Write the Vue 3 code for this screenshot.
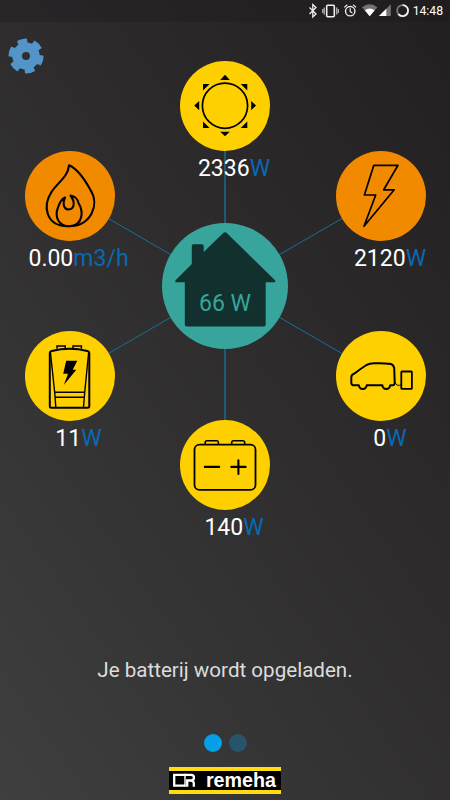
<script setup>
import { ref } from 'vue';

const home = ref(66);
const message = ref('Je batterij wordt opgeladen.');
const pages = 2;
const currentPage = ref(1);

// x and y are the centre of each circle on the canvas
const nodes = ref([
  { id: 'sun', x: 225, y: 45, value: '2336', unit: 'W', color: 'yellow' },
  { id: 'grid', x: 381, y: 135, value: '2120', unit: 'W', color: 'orange' },
  { id: 'car', x: 381, y: 315, value: '0', unit: 'W', color: 'yellow' },
  { id: 'battery', x: 225, y: 404, value: '140', unit: 'W', color: 'yellow' },
  { id: 'boiler', x: 69.5, y: 315, value: '11', unit: 'W', color: 'yellow' },
  { id: 'gas', x: 69.5, y: 135, value: '0.00', unit: 'm3/h', color: 'orange' },
]);

const point = (r, deg) => {
  const a = (deg * Math.PI) / 180;
  return `${(r * Math.cos(a)).toFixed(2)} ${(r * Math.sin(a)).toFixed(2)}`;
};

const gearPath = () => {
  let d = '';
  for (let i = 0; i < 6; i++) {
    const a = -104 + i * 60;
    d += `${i ? 'L' : 'M'}${point(13.7, a - 20)}L${point(17.6, a - 17)}`;
    d += `A17.7 17.7 0 0 1 ${point(17.6, a + 17)}L${point(13.7, a + 20)}`;
    d += `A13.7 13.7 0 0 1 ${point(13.7, a + 40)}`;
  }
  return d + 'ZM4 0A4 4 0 1 0 -4 0A4 4 0 1 0 4 0Z';
};
</script>

<template>
  <div class="screen">
    <header class="status-bar">
      <svg class="status-icons" width="104" height="22" viewBox="306 0 104 22">
        <path d="M309.5 7.5l6.5 6.5-3.2 3V4.5l3.2 3-6.5 6.5" fill="none" stroke="#eee" stroke-width="1.3" />
        <rect x="326.7" y="5.2" width="7.6" height="11.6" rx="1" fill="none" stroke="#eee" stroke-width="1.6" />
        <path d="M324.2 7.5v7M336.8 7.5v7M322.8 9v4M338.3 9v4" stroke="#ddd" stroke-width="1" />
        <circle cx="350.2" cy="11.2" r="4.7" fill="none" stroke="#eee" stroke-width="1.4" />
        <path d="M350.2 8.3v3.2l2.2 1.4M344.3 7.4l3-2.6M356.1 7.4l-3-2.6" fill="none" stroke="#eee" stroke-width="1.2" />
        <path d="M362 7.2Q369.7 1.2 377.4 7.2L369.7 16.2Z" fill="#747273" />
        <path d="M364.8 10.3Q369.7 6.8 374.6 10.3L369.7 16.2Z" fill="#fff" />
        <path d="M390.8 4.2V16H379Z" fill="#747273" />
        <path d="M386.3 8.7V16H379Z" fill="#fff" />
        <circle cx="402.6" cy="10.6" r="5.5" fill="none" stroke="#777" stroke-width="1.8" />
        <path d="M402.6 5.1a5.5 5.5 0 1 1 -4.2 9" fill="none" stroke="#eee" stroke-width="1.8" />
      </svg>
      <span class="clock">14:48</span>
    </header>

    <nav class="toolbar">
      <button class="btn-settings">
        <svg width="38" height="38" viewBox="-19 -19 38 38">
          <path :d="gearPath()" fill="#5395c8" fill-rule="evenodd" />
        </svg>
      </button>
    </nav>

    <main class="diagram">
      <svg class="lines" width="450" height="490" viewBox="0 0 450 490">
        <line
          v-for="n in nodes"
          :key="n.id"
          x1="225"
          y1="225"
          :x2="n.x"
          :y2="n.y"
          stroke="#176f9b"
          :stroke-width="n.x === 225 ? 1.4 : 1"
        />
      </svg>

      <div class="home">
        <svg width="126" height="126" viewBox="0 0 126 126">
          <path
            d="M61 10.2Q63 8.4 65 10.2L113 57.3Q114 59.3 112 59.3H103.7V101.5Q103.7 103.4 101.8 103.4H24.8Q22.8 103.4 22.8 101.5V59.3H14.4Q12.4 59.3 13.6 57.3L29.8 41V23Q29.8 21.2 31.5 21.2H40Q41.7 21.2 41.7 23V29Z"
            fill="#12312e"
          />
        </svg>
        <span class="home-value">{{ home }} W</span>
      </div>

      <div
        v-for="n in nodes"
        :key="n.id"
        class="node"
        :style="{ left: n.x + 'px', top: n.y + 'px' }"
      >
        <div class="circle" :class="n.color">
          <svg width="90" height="90" viewBox="0 0 90 90" fill="none" stroke="#000" stroke-width="1.8">
            <g v-if="n.id === 'sun'">
              <circle cx="45" cy="44.7" r="22.6" stroke-width="1.7" />
              <path
                d="M45 13.7l4.8 5.2h-9.6zM45 75.3l4.8-4.6h-9.6zM14.2 44.5l5-4.6v9.4zM76 44.5l-4.8-4.6v9.4zM23 23h6.6l-6.6 6.4zM67.3 23h-6.6l6.6 6.4zM23 67h6.6l-6.6-6.4zM67.3 67h-6.6l6.6-6.4z"
                fill="#000"
                stroke="none"
              />
            </g>
            <path
              v-else-if="n.id === 'grid'"
              d="M37.8 14.3H62L47.7 38.8H58.2L28 75.3L39.7 44H28.4Z"
              stroke-linejoin="round"
              stroke-width="1.7"
            />
            <g v-else-if="n.id === 'gas'" stroke-linejoin="round" stroke-width="2.1">
              <path d="M44 14.3C43 26 33 31 26.5 41C18 54 19.5 75.2 43.5 75.2C66 75.2 75 54 65.5 39C60 29 53 18 44 14.3Z" />
              <path d="M44.5 75.2C34 75.2 29 66 33 56.5C34.5 51.5 36 48.5 40 46.5C38 51 37.5 58 43.5 58.5C49.5 58.5 50.5 51 45.5 44.5C51 45.5 52.5 48 53.5 52C58.5 60 58.5 74.5 44.5 75.2Z" />
            </g>
            <g v-else-if="n.id === 'car'" stroke-linejoin="round">
              <path d="M17 54.3Q15.3 54 15.3 51V46Q15.5 43.5 18.5 42.5Q25 37.5 30.5 34Q33.5 32.5 38 32.3Q47 31.8 55 33Q57.5 33.8 58.2 37L58.7 51.5Q58.8 54.2 56.5 54.2H54.3C53.5 59.3 47 59.3 46.3 54.2H30.8C30 59.3 23.5 59.3 22.8 54.2Z" stroke-width="2" />
              <path d="M59 51.5Q61 56 65.5 53.5" stroke-width="1" />
              <rect x="65.3" y="40.5" width="10.6" height="17.3" rx="0.6" />
            </g>
            <g v-else-if="n.id === 'boiler'">
              <path d="M24.8 22Q24.8 20.5 26.8 20Q44.5 15.7 62.3 20Q64.3 20.5 64.3 22V75.5Q64.3 76.7 62.8 76.7H26.3Q24.8 76.7 24.8 75.5Z" stroke-width="2" />
              <path d="M25.5 22L29.7 61.5L30.8 76M63.6 22L59.7 61.5L58.5 76M29.5 61.3H59.8M29.8 66.2H59.4" stroke-width="1.4" />
              <path d="M32 17.8V15H40.2V17.3M48 17.3V15H56.4V17.8" stroke-width="1.5" />
              <path d="M41.2 29.8H52.3L47.7 38.8H51.3L38.8 54L43 42.8H38.2Z" fill="#000" stroke="none" />
            </g>
            <g v-else stroke-width="1.8">
              <rect x="14.5" y="24.6" width="61" height="45.3" rx="5" />
              <path d="M25.2 24.2V22.5Q25.2 20.8 27 20.8H37Q38.4 20.8 38.4 22.5V24.2M51.7 24.2V22.5Q51.7 20.8 53.5 20.8H63.2Q64.7 20.8 64.7 22.5V24.2" stroke-width="1.6" />
              <path d="M24.8 46.9H39.2M51.3 46.9H65.6M58.4 40.2V54" stroke-width="2.1" stroke-linecap="round" />
            </g>
          </svg>
        </div>
        <p class="reading">{{ n.value }}<span class="unit">{{ n.unit }}</span></p>
      </div>
    </main>

    <p class="message">{{ message }}</p>

    <div class="pager">
      <span
        v-for="p in pages"
        :key="p"
        class="dot"
        :class="{ active: p === currentPage }"
        @click="currentPage = p"
      ></span>
    </div>

    <footer class="brand">
      <svg width="24" height="15" viewBox="0 0 24 15" fill="none" stroke="#fff" stroke-width="2.3">
        <path d="M12.5 1.8H1.2V12.6H12.5" />
        <path d="M12 0.7V13.7" stroke-width="1.4" />
        <path d="M12 1.8H18.2Q21 1.8 21 4.6Q21 7.5 18.2 7.5H14.2V13.7M17.5 7.6Q20.6 7.6 20.8 10V13.7" />
      </svg>
      <span class="brand-name">remeha</span>
    </footer>
  </div>
</template>

<style>
body {
  background-color: #2d2b2c;
}
</style>

<style scoped>
.screen {
  width: 450px;
  height: 800px;
  display: flex;
  flex-direction: column;
  align-items: center;
  overflow: hidden;
  font-family: Roboto, sans-serif;
  color: #fff;
  background: linear-gradient(55deg, #3f3f40 0%, #2e2c2d 55%, #231f20 100%);
}

.status-bar {
  width: 450px;
  height: 22px;
  box-sizing: border-box;
  padding-right: 7px;
  display: flex;
  justify-content: flex-end;
  align-items: center;
  gap: 3px;
  flex-shrink: 0;
  background-color: rgba(30, 27, 28, 0.35);
}

.clock {
  font-size: 12.2px;
  line-height: 22px;
  color: #fff;
}

.toolbar {
  width: 450px;
  height: 39px;
  box-sizing: border-box;
  padding: 15px 0 0 7px;
  flex-shrink: 0;
}

.btn-settings {
  display: block;
  padding: 0;
  border: none;
  background: none;
  cursor: pointer;
}

.diagram {
  position: relative;
  width: 450px;
  height: 490px;
  flex-shrink: 0;
}

.lines {
  display: block;
}

.home {
  position: absolute;
  left: 162px;
  top: 162px;
  width: 126px;
  height: 126px;
  border-radius: 50%;
  background-color: #37a59b;
}

.home-value {
  position: absolute;
  left: 0;
  right: 0;
  top: 67px;
  text-align: center;
  font-size: 23px;
  line-height: 28px;
  color: #37a59b;
}

.node {
  position: absolute;
  width: 90px;
  margin: -45px 0 0 -45px;
  display: flex;
  flex-direction: column;
  align-items: center;
}

.circle {
  width: 90px;
  height: 90px;
  border-radius: 50%;
}

.circle svg {
  display: block;
}

.yellow {
  background-color: #ffd000;
}

.orange {
  background-color: #f28a00;
}

.reading {
  margin: 4px 0 0;
  padding-left: 18px;
  font-size: 23px;
  line-height: 28px;
  white-space: nowrap;
}

.unit {
  color: #0869b3;
}

.message {
  margin: 106px 0 0;
  font-size: 20.6px;
  line-height: 26px;
  color: #dcdcdc;
}

.pager {
  display: flex;
  gap: 7px;
  margin-top: 51px;
}

.dot {
  width: 18px;
  height: 18px;
  border-radius: 50%;
  background-color: #28546b;
  cursor: pointer;
}

.dot.active {
  background-color: #049fe6;
}

.brand {
  width: 112px;
  height: 27px;
  margin-top: 15px;
  box-sizing: border-box;
  padding: 0 5px 0 4px;
  display: flex;
  align-items: center;
  justify-content: space-between;
  border-top: 4px solid #ffdb10;
  border-bottom: 4px solid #ffdb10;
  background-color: #000;
}

.brand-name {
  font-family: "Liberation Sans", sans-serif;
  font-weight: bold;
  font-size: 19.7px;
  line-height: 19px;
}
</style>
